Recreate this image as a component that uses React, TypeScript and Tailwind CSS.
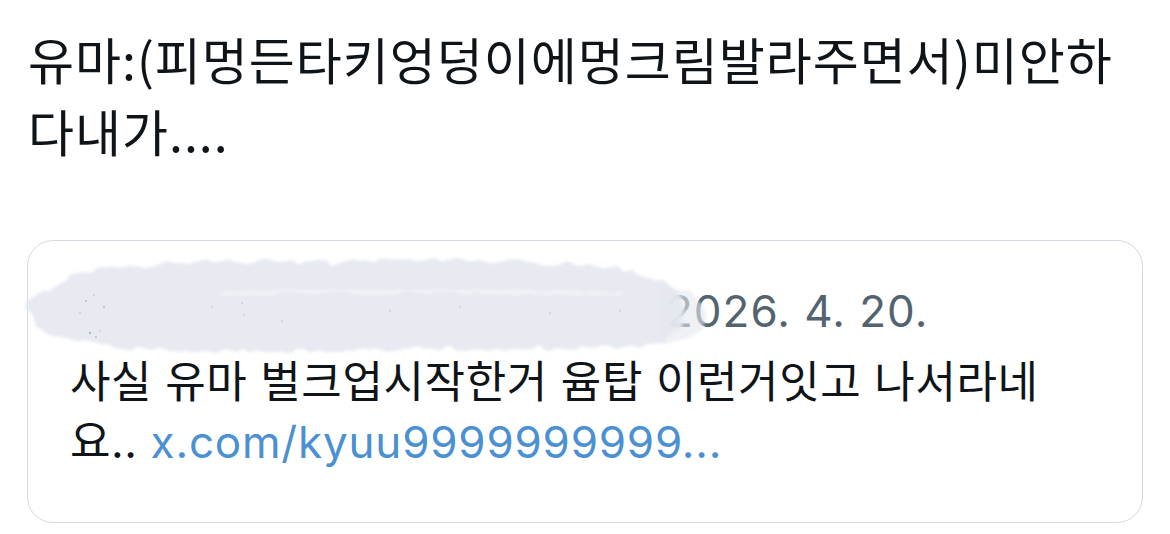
const Redaction = () => (
  <svg
    className="pointer-events-none absolute left-[-8px] top-[14px]"
    width="710"
    height="104"
    viewBox="0 0 710 104"
  >
    <defs>
      <filter id="rough" x="-5%" y="-20%" width="110%" height="140%">
        <feTurbulence type="fractalNoise" baseFrequency="0.06" numOctaves="2" seed="3" />
        <feDisplacementMap in="SourceGraphic" scale="12" xChannelSelector="R" yChannelSelector="G" />
        <feGaussianBlur stdDeviation="1.4" />
      </filter>
    </defs>
    <path
      d="M6,54 C8,40 22,36 44,30 C60,10 110,8 170,8 L420,6 C510,6 570,8 610,16 C640,22 662,34 664,52 C666,74 650,90 610,92 L420,94 C330,96 240,98 170,96 C120,94 90,90 60,86 C40,84 14,76 6,54 Z"
      fill="#e4e8ef"
      fillOpacity="0.9"
      filter="url(#rough)"
    />
    <path
      d="M640,30 C670,34 688,48 686,64 C684,80 664,88 640,86 Z"
      fill="#e4e8ef"
      fillOpacity="0.6"
      filter="url(#rough)"
    />
    <path
      d="M200,40 C320,34 470,34 600,40"
      stroke="#eef1f5"
      strokeWidth="6"
      fill="none"
      filter="url(#rough)"
    />
    <g fill="#8f98a3" opacity="0.55">
      <circle cx="66" cy="46" r="1" />
      <circle cx="74" cy="40" r="0.8" />
      <circle cx="84" cy="52" r="0.9" />
      <circle cx="60" cy="58" r="0.8" />
      <circle cx="70" cy="78" r="1.2" />
      <circle cx="76" cy="82" r="1" />
      <circle cx="80" cy="76" r="0.8" />
      <circle cx="192" cy="52" r="0.8" />
      <circle cx="222" cy="48" r="0.8" />
      <circle cx="224" cy="60" r="0.7" />
      <circle cx="262" cy="66" r="0.7" />
      <circle cx="370" cy="56" r="0.7" />
      <circle cx="440" cy="52" r="0.8" />
      <circle cx="530" cy="58" r="0.7" />
      <circle cx="600" cy="56" r="0.7" />
    </g>
  </svg>
)

export default function App() {
  return (
    <div className="h-[534px] w-[1170px] overflow-hidden bg-white text-[#0f1419]">
      <p
        className="px-[28px] pt-[22px] text-[50px] leading-[72px] tracking-[1px]"
        style={{ fontFamily: '"Noto Sans CJK KR", sans-serif' }}
      >
        유마:(피멍든타키엉덩이에멍크림발라주면서)미안하다내가....
      </p>

      <div
        className="relative mx-[27px] mt-[74px] h-[283px] rounded-[26px] border border-[#d4dae0] px-[42px] pt-[40px] tracking-[0.6px]"
        style={{ fontFamily: 'Inter, "Noto Sans CJK KR", sans-serif' }}
      >
        <div className="flex items-center text-[44px] leading-[60px]">
          <div className="w-[596px] shrink-0" />
          <span className="tracking-[1px] text-[#536471]">2026. 4. 20.</span>
        </div>
        <p className="mt-[11px] text-[44px] leading-[60px]">
          사실 유마 벌크업시작한거 윰탑 이런거잇고 나서라네
          <br />
          요.. <span className="tracking-[0.8px] text-[#4a90d2]">x.com/kyuu9999999999...</span>
        </p>
        <Redaction />
      </div>
    </div>
  )
}
